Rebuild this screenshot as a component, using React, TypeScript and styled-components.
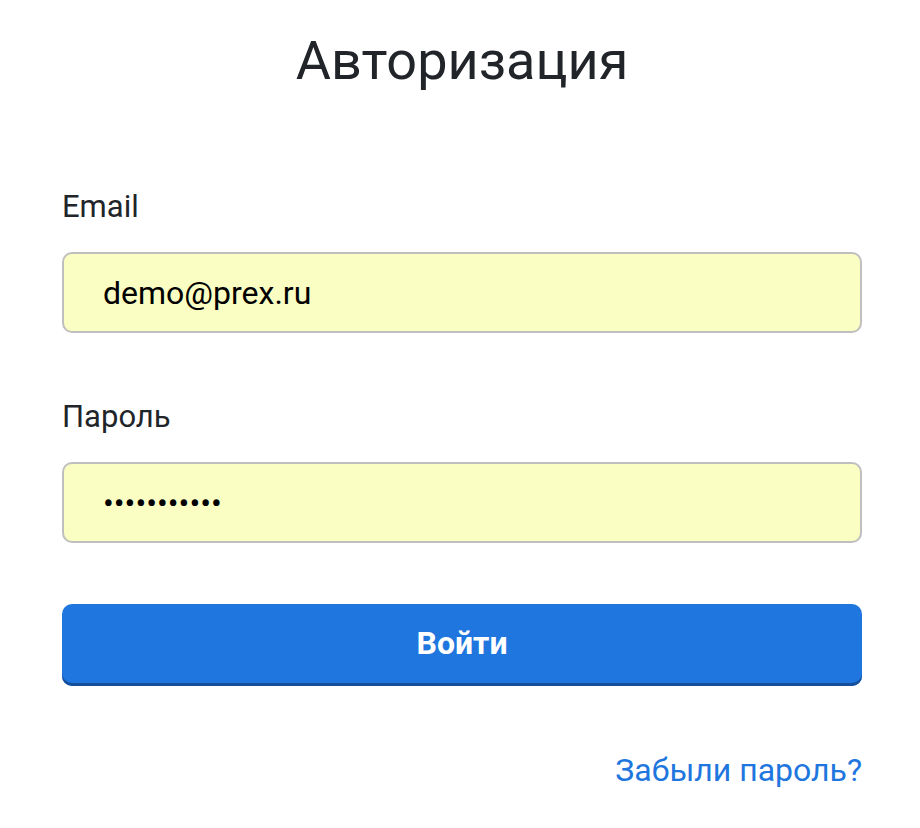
import React, { useState } from "react";
import styled, { createGlobalStyle } from "styled-components";

const GlobalStyle = createGlobalStyle`
  * {
    margin: 0;
    padding: 0;
    box-sizing: border-box;
  }

  body {
    background: #ffffff;
    font-family: Roboto, "Noto Sans", Arial, sans-serif;
    color: #212529;
  }
`;

const App: React.FC = () => {
  const [email, setEmail] = useState("demo@prex.ru");
  const [password, setPassword] = useState("12345678901");

  return (
    <>
      <GlobalStyle />
      <Page>
        <Title>Авторизация</Title>
        <Form onSubmit={(e) => e.preventDefault()}>
          <Field>
            <Label htmlFor="email">Email</Label>
            <Input
              id="email"
              type="email"
              value={email}
              onChange={(e) => setEmail(e.target.value)}
            />
          </Field>

          <Field>
            <Label htmlFor="password">Пароль</Label>
            <Input
              id="password"
              type="password"
              value={password}
              onChange={(e) => setPassword(e.target.value)}
            />
          </Field>

          <Button type="submit">Войти</Button>

          <Footer>
            <ForgotLink href="#">Забыли пароль?</ForgotLink>
          </Footer>
        </Form>
      </Page>
    </>
  );
};

const Page = styled.div`
  width: 800px;
  margin-left: 62px;
  padding-top: 25px;
`;

const Title = styled.h1`
  font-size: 54px;
  font-weight: 400;
  line-height: 72px;
  text-align: center;
  color: #212529;
  margin-bottom: 87px;
`;

const Form = styled.form`
  display: flex;
  flex-direction: column;
`;

const Field = styled.div`
  display: flex;
  flex-direction: column;
  margin-bottom: 61px;
`;

const Label = styled.label`
  font-size: 31px;
  line-height: 40px;
  color: #212529;
  margin-top: 3px;
  margin-bottom: 25px;
`;

const Input = styled.input`
  width: 100%;
  height: 81px;
  padding: 0 39px;
  background: #fafec2;
  border: 2px solid #bfbfbf;
  border-radius: 10px;
  font-family: Roboto, "Noto Sans", Arial, sans-serif;
  font-size: 32px;
  color: #000000;
  outline: none;
`;

const Button = styled.button`
  width: 100%;
  height: 82px;
  padding-bottom: 5px;
  border: none;
  border-radius: 10px;
  background: #1e76de;
  box-shadow: inset 0 -3px 0 #154f9c;
  color: #ffffff;
  font-family: Roboto, "Noto Sans", Arial, sans-serif;
  font-size: 32px;
  font-weight: 700;
  cursor: pointer;
`;

const Footer = styled.div`
  display: flex;
  justify-content: flex-end;
  margin-top: 64px;
`;

const ForgotLink = styled.a`
  font-size: 32px;
  line-height: 40px;
  color: #1e76de;
  text-decoration: none;
`;

export default App;
